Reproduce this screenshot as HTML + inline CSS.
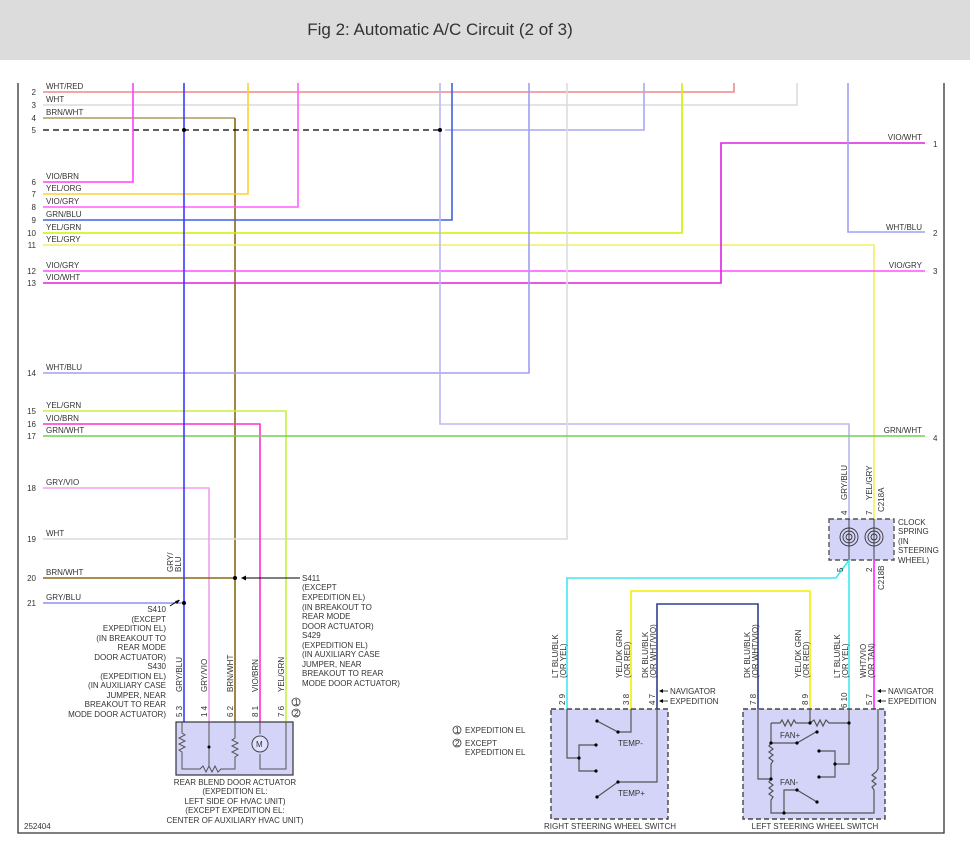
<!DOCTYPE html>
<html><head><meta charset="utf-8"><style>
html,body{margin:0;padding:0;background:#fff;width:970px;height:846px;overflow:hidden}
.hd{position:absolute;left:0;top:0;width:970px;height:60px;background:#dcdcdc;}
.hd div{position:absolute;left:0;width:880px;top:20px;text-align:center;font:17px "Liberation Sans",sans-serif;color:#333}
svg{position:absolute;left:0;top:0}
text{font-family:"Liberation Sans",sans-serif;font-size:8px;fill:#333}
.n{fill:#555}
</style></head><body>
<div class="hd"><div>Fig 2: Automatic A/C Circuit (2 of 3)</div></div>
<svg width="970" height="846" viewBox="0 0 970 846">
<g fill="none" stroke-width="1.6">
<path d="M18 83V833H944V83" stroke="#333" stroke-width="1.3"/>
<path d="M43 92H734V83" stroke="#f08888"/>
<path d="M43 105H797V83" stroke="#dcdcdc"/>
<path d="M43 118H235" stroke="#b09a60"/>
<path d="M235 118V722" stroke="#8b6914"/>
<path d="M43 130H440" stroke="#000" stroke-width="1.2" stroke-dasharray="6 4"/>
<path d="M445 130H644V83" stroke="#a8a8f0"/>
<path d="M43 182H133V83" stroke="#ff40ff"/>
<path d="M43 194H248V83" stroke="#ffd030"/>
<path d="M43 207H298V83" stroke="#ff60ff"/>
<path d="M43 220H452V83" stroke="#4060e0"/>
<path d="M43 233H682V83" stroke="#d0f000"/>
<path d="M43 245H874V519" stroke="#f0f060"/>
<path d="M43 271H925" stroke="#ff50ff"/>
<path d="M43 283H721V143H925" stroke="#e020e0"/>
<path d="M848 83V232H925" stroke="#a0a0f0"/>
<path d="M43 373H529V83" stroke="#a0a0f0"/>
<path d="M440 83V424H849V519" stroke="#b8b8f0"/>
<path d="M567 83V539H43" stroke="#dcdcdc"/>
<path d="M43 411H286V722" stroke="#c8f040"/>
<path d="M43 424H260V722" stroke="#ff30d0"/>
<path d="M43 436H925" stroke="#70d050"/>
<path d="M43 488H209V722" stroke="#f0a0f0"/>
<path d="M43 578H235" stroke="#8b6914"/>
<path d="M43 603H184" stroke="#9090f0"/>
<path d="M184 83V722" stroke="#3a3aff"/>
<path d="M849 560L836 578H567V709" stroke="#40e8f0"/>
<path d="M849 560V709" stroke="#40e8f0"/>
<path d="M874 560V709" stroke="#ff20ff"/>
<path d="M631 709V591H810V709" stroke="#f0f000"/>
<path d="M657 709V604H758V709" stroke="#304090"/>
</g>
<g fill="#000"><circle cx="184" cy="130" r="2"/><circle cx="440" cy="130" r="2"/><circle cx="235" cy="578" r="2"/><circle cx="184" cy="603" r="2"/></g>
<path d="M300 578H242" stroke="#000" fill="none"/><path d="M241 578l5-2.5v5z"/>
<path d="M170 606l9-6" stroke="#000" fill="none"/><path d="M180 600l-5 1 2 3z"/>
<g class="n" text-anchor="end">
<text x="36" y="95">2</text><text x="36" y="108">3</text><text x="36" y="121">4</text><text x="36" y="133">5</text>
<text x="36" y="185">6</text><text x="36" y="197">7</text><text x="36" y="210">8</text><text x="36" y="223">9</text>
<text x="36" y="236">10</text><text x="36" y="248">11</text><text x="36" y="274">12</text><text x="36" y="286">13</text>
<text x="36" y="376">14</text><text x="36" y="414">15</text><text x="36" y="427">16</text><text x="36" y="439">17</text>
<text x="36" y="491">18</text><text x="36" y="542">19</text><text x="36" y="581">20</text><text x="36" y="606">21</text>
</g>
<g>
<text x="46" y="89">WHT/RED</text><text x="46" y="102">WHT</text><text x="46" y="115">BRN/WHT</text>
<text x="46" y="179">VIO/BRN</text><text x="46" y="191">YEL/ORG</text><text x="46" y="204">VIO/GRY</text><text x="46" y="217">GRN/BLU</text>
<text x="46" y="230">YEL/GRN</text><text x="46" y="242">YEL/GRY</text><text x="46" y="268">VIO/GRY</text><text x="46" y="280">VIO/WHT</text>
<text x="46" y="370">WHT/BLU</text><text x="46" y="408">YEL/GRN</text><text x="46" y="421">VIO/BRN</text><text x="46" y="433">GRN/WHT</text>
<text x="46" y="485">GRY/VIO</text><text x="46" y="536">WHT</text><text x="46" y="575">BRN/WHT</text><text x="46" y="600">GRY/BLU</text>
</g>
<g text-anchor="end">
<text x="922" y="140">VIO/WHT</text><text x="922" y="230">WHT/BLU</text><text x="922" y="268">VIO/GRY</text><text x="922" y="433">GRN/WHT</text>
</g>
<g class="n"><text x="933" y="147">1</text><text x="933" y="236">2</text><text x="933" y="274">3</text><text x="933" y="441">4</text></g>
<g text-anchor="end">
<text x="166" y="612">S410</text><text x="166" y="622">(EXCEPT</text><text x="166" y="631">EXPEDITION EL)</text><text x="166" y="641">(IN BREAKOUT TO</text><text x="166" y="650">REAR MODE</text><text x="166" y="660">DOOR ACTUATOR)</text><text x="166" y="669">S430</text><text x="166" y="679">(EXPEDITION EL)</text><text x="166" y="688">(IN AUXILIARY CASE</text><text x="166" y="698">JUMPER, NEAR</text><text x="166" y="707">BREAKOUT TO REAR</text><text x="166" y="717">MODE DOOR ACTUATOR)</text>
</g>
<g>
<text x="302" y="581">S411</text><text x="302" y="590">(EXCEPT</text><text x="302" y="600">EXPEDITION EL)</text><text x="302" y="610">(IN BREAKOUT TO</text><text x="302" y="619">REAR MODE</text><text x="302" y="629">DOOR ACTUATOR)</text><text x="302" y="638">S429</text><text x="302" y="648">(EXPEDITION EL)</text><text x="302" y="657">(IN AUXILIARY CASE</text><text x="302" y="667">JUMPER, NEAR</text><text x="302" y="676">BREAKOUT TO REAR</text><text x="302" y="686">MODE DOOR ACTUATOR)</text>
</g>
<g>
<text transform="translate(173,572) rotate(-90)">GRY/</text><text transform="translate(181,572) rotate(-90)">BLU</text>
<text transform="translate(182,692) rotate(-90)">GRY/BLU</text>
<text transform="translate(207,692) rotate(-90)">GRY/VIO</text>
<text transform="translate(233,692) rotate(-90)">BRN/WHT</text>
<text transform="translate(258,692) rotate(-90)">VIO/BRN</text>
<text transform="translate(284,692) rotate(-90)">YEL/GRN</text>
<text transform="translate(182,717) rotate(-90)">5 3</text>
<text transform="translate(207,717) rotate(-90)">1 4</text>
<text transform="translate(233,717) rotate(-90)">6 2</text>
<text transform="translate(258,717) rotate(-90)">8 1</text>
<text transform="translate(284,717) rotate(-90)">7 6</text>
</g>
<circle cx="296" cy="702" r="4" fill="none" stroke="#333" stroke-width=".8"/><text x="294" y="705" font-size="6">1</text>
<circle cx="296" cy="713" r="4" fill="none" stroke="#333" stroke-width=".8"/><text x="294" y="716" font-size="6">2</text>
<rect x="176" y="722" width="117" height="53" fill="#d4d4f8" stroke="#333" stroke-width="1.2"/>
<g fill="none" stroke="#555" stroke-width="1">
<path d="M182 722V733l3 2-6 3 6 3-6 3 6 3-6 3 3 2V769H200l3-3 3 6 3-6 3 6 3-6 3 6 3-3H235V757l3-2-6-3 6-3-6-3 6-3-6-3 3-2V722"/>
<path d="M209 722V766"/><path d="M260 722V734M260 754V769H286V722"/>
</g>
<circle cx="209" cy="747" r="1.5"/><circle cx="260" cy="744" r="8" fill="#e0e0ff" stroke="#444"/><text x="256" y="747" font-size="8">M</text>
<g text-anchor="middle">
<text x="235" y="785">REAR BLEND DOOR ACTUATOR</text><text x="235" y="794">(EXPEDITION EL:</text><text x="235" y="804">LEFT SIDE OF HVAC UNIT)</text><text x="235" y="813">(EXCEPT EXPEDITION EL:</text><text x="235" y="823">CENTER OF AUXILIARY HVAC UNIT)</text>
</g>
<text x="24" y="829">252404</text>
<rect x="829" y="519" width="65" height="41" fill="#d4d4f8" stroke="#555" stroke-width="1.4" stroke-dasharray="5 3"/>
<g fill="none" stroke="#333" stroke-width=".9">
<circle cx="849" cy="537" r="9"/><circle cx="849" cy="537" r="6"/><circle cx="849" cy="537" r="3"/>
<circle cx="874" cy="537" r="9"/><circle cx="874" cy="537" r="6"/><circle cx="874" cy="537" r="3"/>
<path d="M849 519V560M874 519V560"/>
</g>
<g><text x="898" y="525">CLOCK</text><text x="898" y="534">SPRING</text><text x="898" y="544">(IN</text><text x="898" y="553">STEERING</text><text x="898" y="563">WHEEL)</text></g>
<g>
<text transform="translate(847,500) rotate(-90)">GRY/BLU</text><text transform="translate(872,500) rotate(-90)">YEL/GRY</text>
<text transform="translate(847,515) rotate(-90)">4</text><text transform="translate(872,515) rotate(-90)">7</text>
<text transform="translate(884,512) rotate(-90)">C218A</text>
<text transform="translate(843,572) rotate(-90)">5</text><text transform="translate(872,572) rotate(-90)">2</text>
<text transform="translate(884,590) rotate(-90)">C218B</text>
</g>
<rect x="551" y="709" width="117" height="110" fill="#d4d4f8" stroke="#444" stroke-width="1.4" stroke-dasharray="5 3"/>
<g fill="none" stroke="#555" stroke-width="1.2">
<path d="M567 709V758H579V745H596M579 758V771H596"/>
<path d="M631 709V732H618L597 721"/>
<path d="M657 709V782H618L597 797"/>
</g>
<g fill="#000"><circle cx="579" cy="758" r="1.6"/><circle cx="596" cy="745" r="1.6"/><circle cx="596" cy="771" r="1.6"/><circle cx="618" cy="732" r="1.6"/><circle cx="597" cy="721" r="1.6"/><circle cx="618" cy="782" r="1.6"/><circle cx="597" cy="797" r="1.6"/></g>
<text x="618" y="746">TEMP-</text><text x="618" y="796">TEMP+</text>
<text x="610" y="829" text-anchor="middle">RIGHT STEERING WHEEL SWITCH</text>
<rect x="743" y="709" width="142" height="110" fill="#d4d4f8" stroke="#444" stroke-width="1.4" stroke-dasharray="5 3"/>
<g fill="none" stroke="#555" stroke-width="1.2">
<path d="M758 709V779H771"/>
<path d="M771 723H780l2-3 3 6 3-6 3 6 3-6 2 3H810l4-3 3 6 3-6 3 6 3-6 3 3H849V709"/>
<path d="M810 709V723"/>
<path d="M771 723V743l-2 3 4 3-4 3 4 3-4 3 4 3-2 3V779l-2 3 4 3-4 3 4 3-4 3 4 3-2 3V813H874V790l-2-3 4-3-4-3 4-3-4-3 4-3 2-3V709"/>
<path d="M771 743H797L816 732"/>
<path d="M849 723V764H835V751H819M835 764V777H819"/>
<path d="M784 813V790H797L817 802"/>
</g>
<g fill="#000"><circle cx="771" cy="743" r="1.6"/><circle cx="797" cy="743" r="1.6"/><circle cx="817" cy="732" r="1.6"/><circle cx="810" cy="723" r="1.6"/><circle cx="849" cy="723" r="1.6"/><circle cx="835" cy="764" r="1.6"/><circle cx="819" cy="751" r="1.6"/><circle cx="819" cy="777" r="1.6"/><circle cx="771" cy="779" r="1.6"/><circle cx="797" cy="790" r="1.6"/><circle cx="817" cy="802" r="1.6"/><circle cx="784" cy="813" r="1.6"/></g>
<text x="780" y="738">FAN+</text><text x="780" y="785">FAN-</text>
<text x="815" y="829" text-anchor="middle">LEFT STEERING WHEEL SWITCH</text>
<g>
<text transform="translate(558,678) rotate(-90)">LT BLU/BLK</text><text transform="translate(566,678) rotate(-90)">(OR YEL)</text>
<text transform="translate(622,678) rotate(-90)">YEL/DK GRN</text><text transform="translate(630,678) rotate(-90)">(OR RED)</text>
<text transform="translate(648,678) rotate(-90)">DK BLU/BLK</text><text transform="translate(656,678) rotate(-90)">(OR WHT/VIO)</text>
<text transform="translate(750,678) rotate(-90)">DK BLU/BLK</text><text transform="translate(758,678) rotate(-90)">(OR WHT/VIO)</text>
<text transform="translate(801,678) rotate(-90)">YEL/DK GRN</text><text transform="translate(809,678) rotate(-90)">(OR RED)</text>
<text transform="translate(840,678) rotate(-90)">LT BLU/BLK</text><text transform="translate(848,678) rotate(-90)">(OR YEL)</text>
<text transform="translate(866,678) rotate(-90)">WHT/VIO</text><text transform="translate(874,678) rotate(-90)">(OR TAN)</text>
<text transform="translate(565,705) rotate(-90)">2 9</text><text transform="translate(629,705) rotate(-90)">3 8</text><text transform="translate(655,705) rotate(-90)">4 7</text>
<text transform="translate(756,705) rotate(-90)">7 8</text><text transform="translate(808,705) rotate(-90)">8 9</text><text transform="translate(847,708) rotate(-90)">6 10</text><text transform="translate(872,705) rotate(-90)">5 7</text>
</g>
<g stroke="#000" stroke-width=".8"><path d="M660 691H668M660 701H668M878 691H886M878 701H886"/></g>
<g><path d="M659 691l4-2v4zM659 701l4-2v4zM877 691l4-2v4zM877 701l4-2v4z"/></g>
<text x="670" y="694">NAVIGATOR</text><text x="670" y="704">EXPEDITION</text>
<text x="888" y="694">NAVIGATOR</text><text x="888" y="704">EXPEDITION</text>
<circle cx="457" cy="730" r="4" fill="none" stroke="#333" stroke-width=".8"/><text x="455" y="733" font-size="6">1</text>
<circle cx="457" cy="743" r="4" fill="none" stroke="#333" stroke-width=".8"/><text x="455" y="746" font-size="6">2</text>
<text x="465" y="733">EXPEDITION EL</text><text x="465" y="746">EXCEPT</text><text x="465" y="755">EXPEDITION EL</text>
</svg>
</body></html>
